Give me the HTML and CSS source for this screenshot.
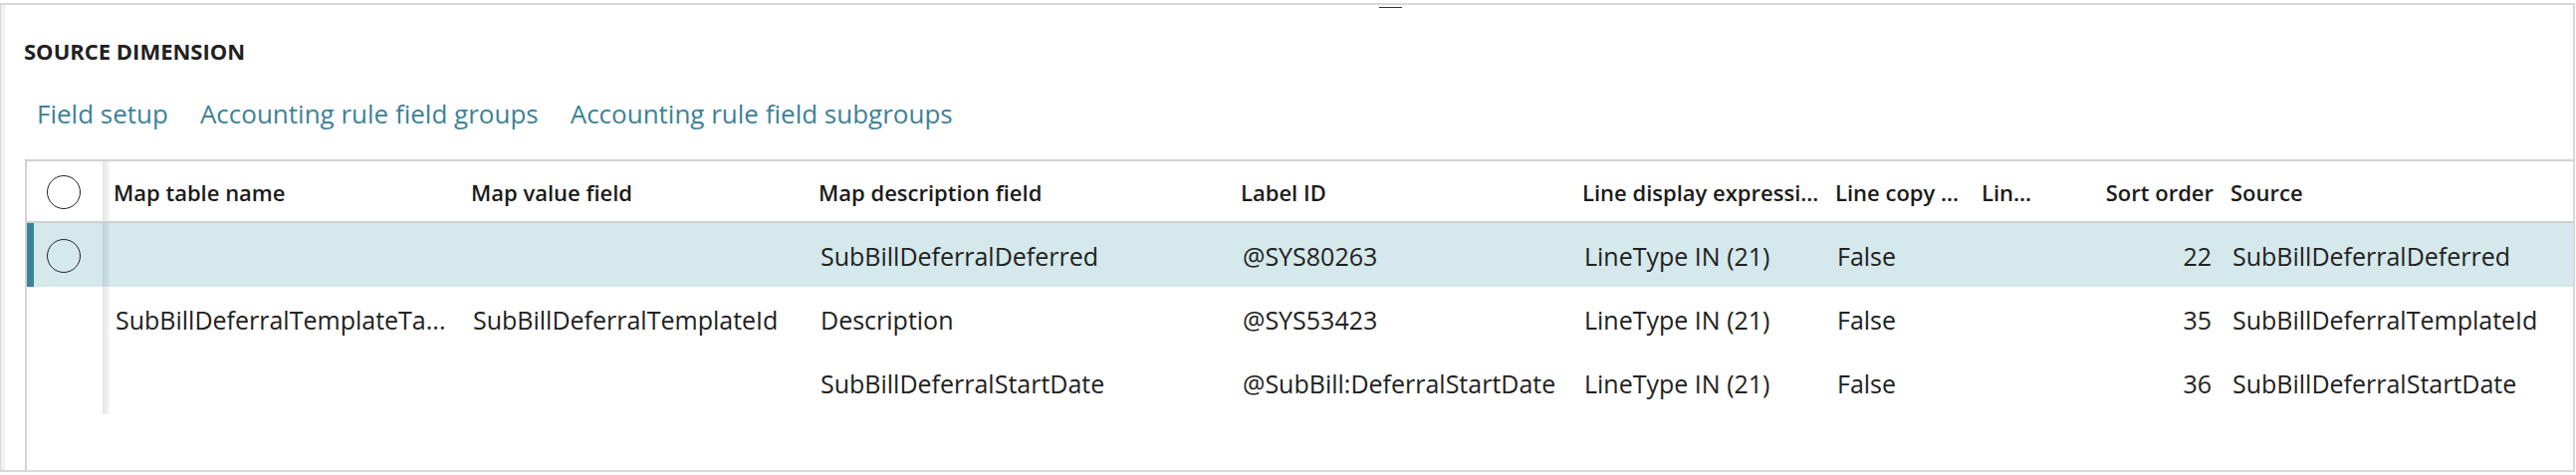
FILE: index.html
```html
<!DOCTYPE html>
<html lang="en">
<head>
<meta charset="utf-8">
<title>Source dimension</title>
<link rel="stylesheet" href="styles.css">
</head>
<body>
<main class="panel">
  <button class="splitter" type="button" aria-label="Resize panel"></button>
  <h2 class="title">SOURCE DIMENSION</h2>
  <div class="toolbar">
    <button class="action" type="button">Field setup</button>
    <button class="action" type="button">Accounting rule field groups</button>
    <button class="action" type="button">Accounting rule field subgroups</button>
  </div>
  <div class="grid-frame">
    <table class="grid">
      <colgroup>
        <col class="col-select">
        <col class="col-table">
        <col class="col-value">
        <col class="col-description">
        <col class="col-label">
        <col class="col-expression">
        <col class="col-copy">
        <col class="col-line">
        <col class="col-sort">
        <col class="col-source">
      </colgroup>
      <thead>
        <tr>
          <th class="select"><input class="check" type="checkbox" aria-label="Select all rows"></th>
          <th class="first">Map table name</th>
          <th>Map value field</th>
          <th>Map description field</th>
          <th>Label ID</th>
          <th>Line display expressi...</th>
          <th>Line copy ...</th>
          <th>Lin...</th>
          <th class="number">Sort order</th>
          <th>Source</th>
        </tr>
      </thead>
      <tbody>
        <tr class="selected">
          <td class="select"><input class="check" type="checkbox" aria-label="Select row"></td>
          <td class="first"></td>
          <td></td>
          <td>SubBillDeferralDeferred</td>
          <td>@SYS80263</td>
          <td>LineType IN (21)</td>
          <td>False</td>
          <td></td>
          <td class="number">22</td>
          <td>SubBillDeferralDeferred</td>
        </tr>
        <tr>
          <td class="select"></td>
          <td class="first">SubBillDeferralTemplateTa...</td>
          <td>SubBillDeferralTemplateId</td>
          <td>Description</td>
          <td>@SYS53423</td>
          <td>LineType IN (21)</td>
          <td>False</td>
          <td></td>
          <td class="number">35</td>
          <td>SubBillDeferralTemplateId</td>
        </tr>
        <tr>
          <td class="select"></td>
          <td class="first"></td>
          <td></td>
          <td>SubBillDeferralStartDate</td>
          <td>@SubBill:DeferralStartDate</td>
          <td>LineType IN (21)</td>
          <td>False</td>
          <td></td>
          <td class="number">36</td>
          <td>SubBillDeferralStartDate</td>
        </tr>
      </tbody>
    </table>
  </div>
</main>
</body>
</html>
```
FILE: styles.css
```css
* { box-sizing: border-box; }

body {
  margin: 0;
  padding: 3px 1px 3px 0;
  min-height: 100vh;
  display: flex;
  background: #fff;
  color: #212121;
  font-family: "Open Sans", "Noto Sans", sans-serif;
  font-size: 25px;
}

button {
  margin: 0;
  padding: 0;
  border: 0;
  background: none;
  font: inherit;
}

.panel {
  position: relative;
  flex: 1;
  min-width: 0;
  display: flex;
  flex-direction: column;
  padding-left: 20px;
  border: 2px solid #d8d8d8;
  border-left: 1px solid #d8d8d8;
  box-shadow: inset 4px 0 #f3f1ef;
}

.splitter {
  position: absolute;
  top: 2px;
  left: 54%;
  width: 23px;
  height: 1px;
  margin-left: -11px;
  background: #333;
}

.title {
  margin: 0;
  padding: 30px 3px 0;
  font-size: 22px;
  line-height: 32px;
  font-weight: 700;
}

.toolbar {
  display: flex;
  gap: 32px;
  padding: 28px 16px 27px;
}

.action {
  color: #3c8297;
  font-size: 26px;
  line-height: 38px;
  cursor: pointer;
}

.grid-frame {
  flex: 1;
  margin-left: 4px;
  border-top: 2px solid #d2d2d2;
  border-left: 2px solid #d2d2d2;
}

.grid {
  width: 100%;
  table-layout: fixed;
  border-collapse: separate;
  border-spacing: 0;
}

.col-select { width: 76px; }
.col-table { width: 359px; }
.col-value { width: 349px; }
.col-description { width: 424px; }
.col-label { width: 343px; }
.col-expression { width: 254px; }
.col-copy { width: 147px; }
.col-line { width: 84px; }
.col-sort { width: 166px; }

.grid th,
.grid td {
  height: 64px;
  padding: 2px 8px 0 13px;
  overflow: hidden;
  text-align: left;
  text-overflow: ellipsis;
  white-space: nowrap;
}

.grid th {
  height: 62px;
  padding: 2px 0 0 11px;
  border-bottom: 2px solid #cfcfcf;
  color: #1b1b1b;
  font-size: 22px;
  font-weight: 600;
}

.grid .number {
  padding-right: 8px;
  text-align: right;
}

.grid th.number { padding-right: 6px; }

.grid .select {
  padding: 1px 0 0 20px;
  text-overflow: clip;
}

.grid .first {
  background: linear-gradient(to right, rgba(0, 0, 0, .1), rgba(0, 0, 0, .03)) no-repeat left / 7px 100%;
}

.selected { background: #d5e8eb; }

.selected .select { box-shadow: inset 7px 0 #3a8297; }

.check {
  appearance: none;
  display: block;
  width: 34px;
  height: 34px;
  margin: 0;
  border: 1px solid #222;
  border-radius: 50%;
}
```
